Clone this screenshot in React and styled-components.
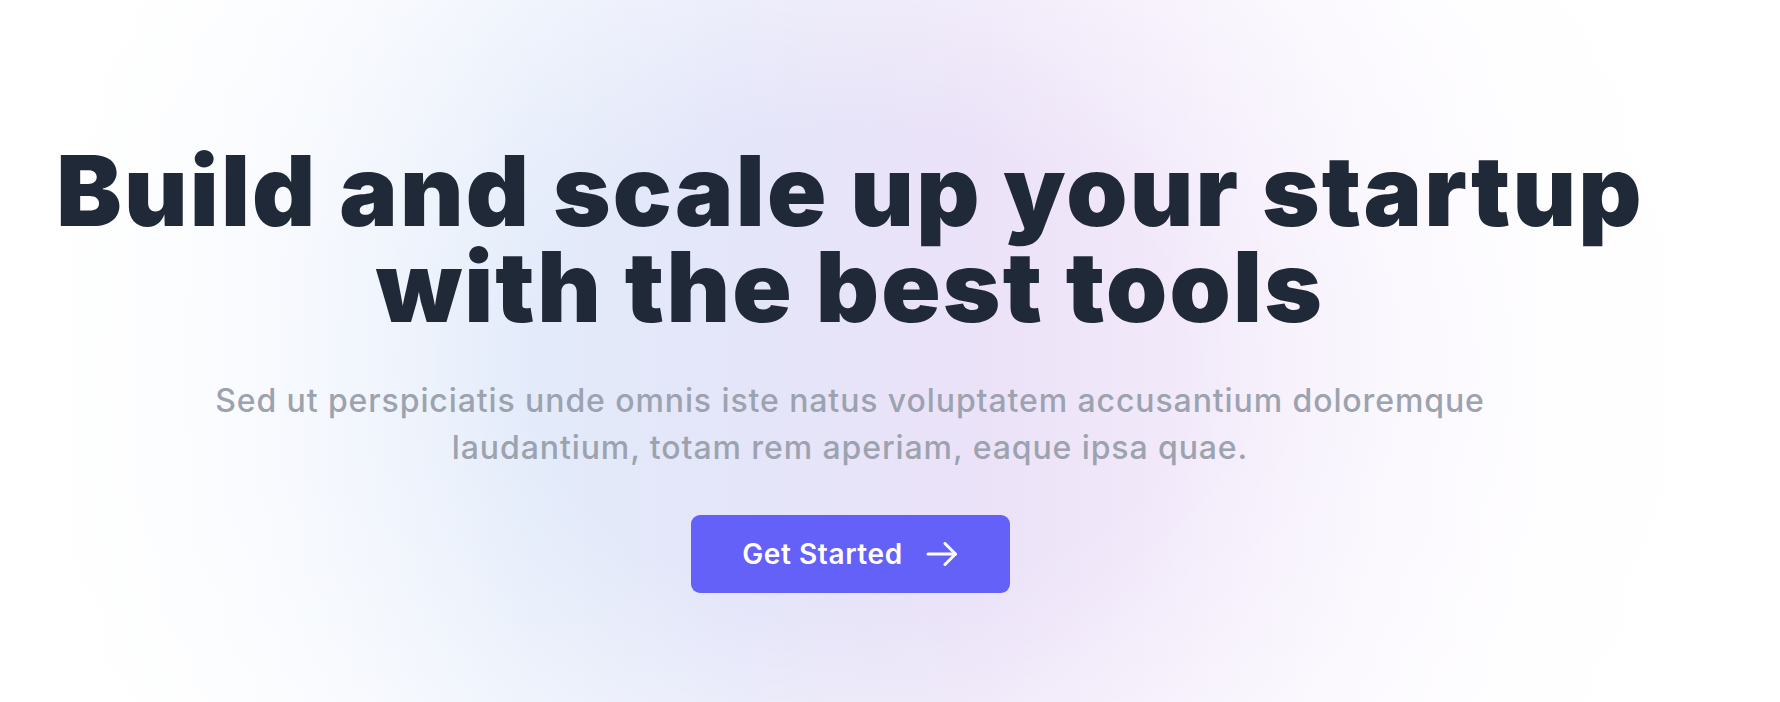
import React from "react";
import styled, { createGlobalStyle } from "styled-components";

const Global = createGlobalStyle`
  html, body { margin: 0; padding: 0; background: #ffffff; }
  body { font-family: Inter, "Noto Sans", sans-serif; -webkit-font-smoothing: antialiased; }
  #root { min-height: 702px; }
`;

const Hero = styled.section`
  position: relative;
  min-height: 702px;
  width: 1780px;
  box-sizing: border-box;
  overflow: hidden;
  background:
    radial-gradient(ellipse 52% 95% at 48% 52%, rgba(255,255,255,0) 35%, rgba(255,255,255,0.55) 70%, #ffffff 100%),
    linear-gradient(90deg, #ffffff 0%, #f2f6fd 15%, #e3ebfa 30%, #e4e5f9 42%, #ebe2f8 55%, #f1e8fa 65%, #f8f3fd 78%, #fdfbfe 90%, #ffffff 100%);
`;

const Content = styled.div`
  width: 1700px;
  box-sizing: border-box;
  padding-top: 143px;
  display: flex;
  flex-direction: column;
  align-items: center;
  text-align: center;
`;

const Title = styled.h1`
  margin: 0;
  font-family: Inter, "Noto Sans", sans-serif;
  font-weight: 900;
  font-size: 98px;
  line-height: 96px;
  letter-spacing: 2.2px;
  color: #1f2937;
`;

const Lead = styled.p`
  margin: 42px 0 0;
  width: 1400px;
  font-family: Inter, "Noto Sans", sans-serif;
  font-weight: 500;
  font-size: 32px;
  line-height: 47px;
  letter-spacing: 0.9px;
  color: #9ca3af;
`;

const Button = styled.button`
  margin-top: 44px;
  width: 319px;
  height: 78px;
  box-sizing: border-box;
  display: flex;
  align-items: center;
  justify-content: center;
  gap: 23px;
  border: none;
  border-radius: 9px;
  background: #6361f8;
  color: #ffffff;
  font-family: Inter, "Noto Sans", sans-serif;
  font-weight: 600;
  font-size: 28px;
  letter-spacing: 0.6px;
  cursor: pointer;
`;

const Arrow = () => (
  <svg width="32" height="24" viewBox="0 0 32 24" fill="none" stroke="#ffffff" strokeWidth="3" strokeLinecap="round" strokeLinejoin="round">
    <path d="M2 12H29.5" />
    <path d="M19 1.5L29.5 12L19 22.5" />
  </svg>
);

export default function App() {
  return (
    <>
      <Global />
      <Hero>
        <Content>
          <Title>
            Build and scale up your startup
            <br />
            with the best tools
          </Title>
          <Lead>
            Sed ut perspiciatis unde omnis iste natus voluptatem accusantium doloremque
            <br />
            laudantium, totam rem aperiam, eaque ipsa quae.
          </Lead>
          <Button>
            <span>Get Started</span>
            <Arrow />
          </Button>
        </Content>
      </Hero>
    </>
  );
}
